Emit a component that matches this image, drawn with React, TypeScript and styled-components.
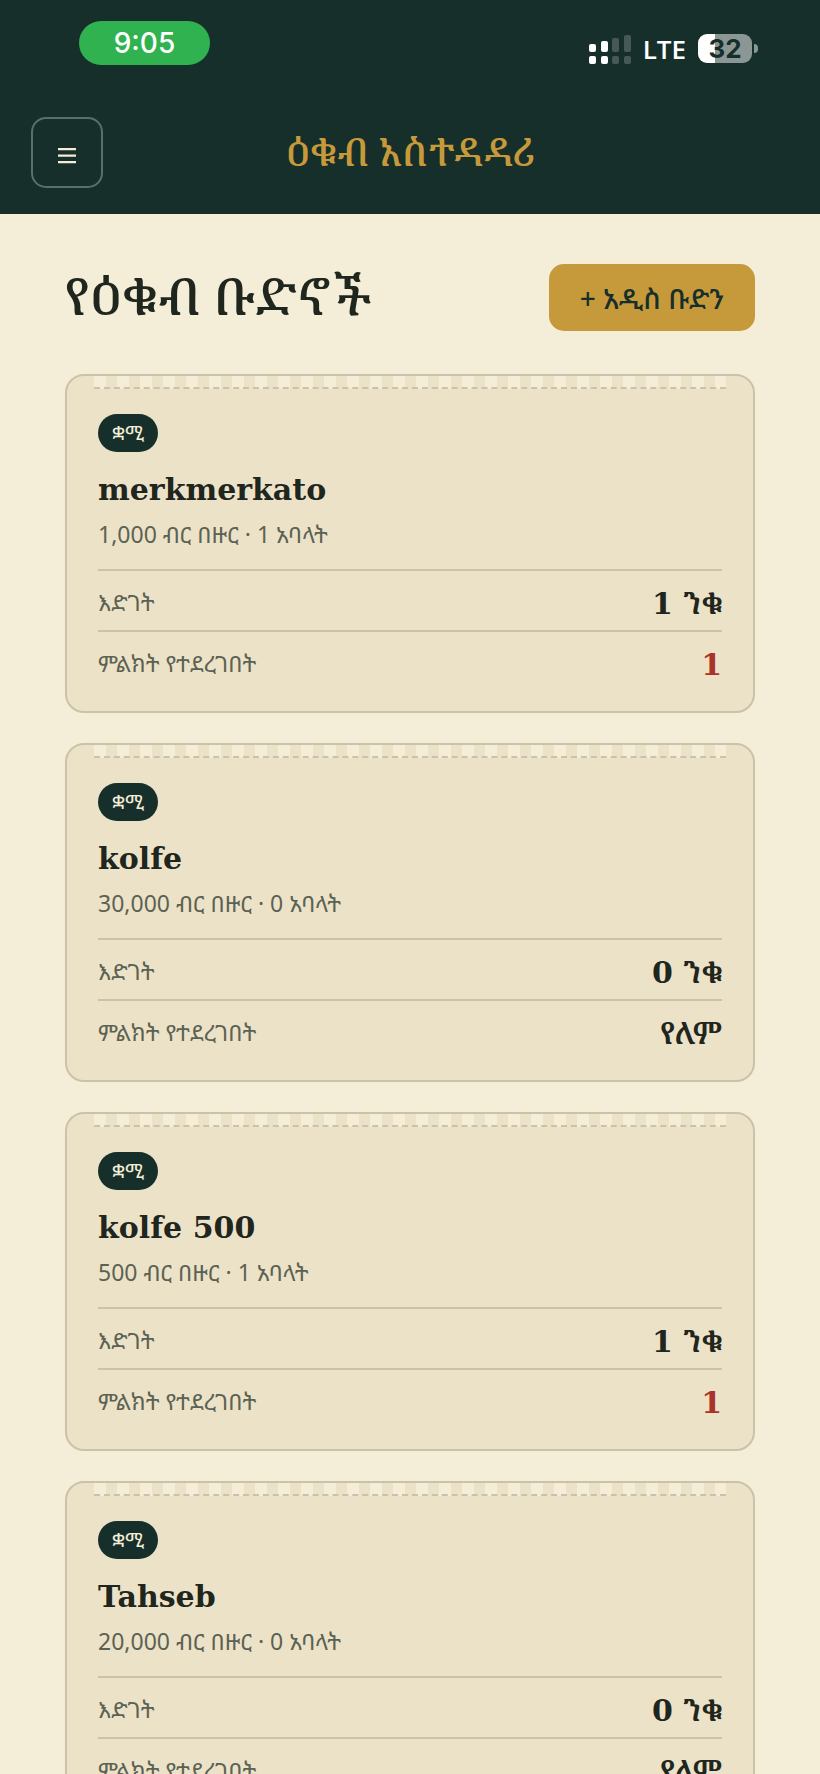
import React from 'react';
import styled, { createGlobalStyle } from 'styled-components';

const color = {
  forest: '#172f2a',
  cream: '#f4edd8',
  card: '#ece2c8',
  line: '#cac3a9',
  gold: '#c69a3b',
  ink: '#1f261d',
  muted: '#5c6253',
  red: '#a93329',
};

const sans = "'Noto Sans', 'Noto Sans Ethiopic', 'Abyssinica SIL', sans-serif";
const display = "'Liberation Serif', 'Noto Serif Ethiopic', 'Abyssinica SIL', serif";
const slab = "'DejaVu Serif', 'Noto Serif Ethiopic', 'Abyssinica SIL', serif";

const GlobalStyle = createGlobalStyle`
  *, *::before, *::after { box-sizing: border-box; }
  body { margin: 0; background: ${color.cream}; color: ${color.ink}; font-family: ${sans}; }
  h1, h2, p, dl, dd, ul { margin: 0; padding: 0; }
  button { font-family: inherit; cursor: pointer; }
`;

const Page = styled.div`
  height: 100vh;
  overflow-y: auto;
  scrollbar-width: none;
`;

const TopArea = styled.div`
  background: ${color.forest};
`;

const StatusBar = styled.div`
  display: flex;
  align-items: center;
  justify-content: space-between;
  height: 97px;
  padding: 0 62px 0 79px;
  color: #fff;
`;

const Clock = styled.time`
  width: 131px;
  margin-bottom: 12px;
  border-radius: 22px;
  background: #2fb24f;
  font-family: Inter, sans-serif;
  font-size: 28px;
  font-weight: 500;
  line-height: 44px;
  text-align: center;
`;

const StatusIcons = styled.div`
  display: flex;
  align-items: center;
  gap: 12px;
`;

const Network = styled.span`
  font-family: 'Open Sans', sans-serif;
  font-size: 26px;
  font-weight: 600;
  line-height: 32px;
`;

const Battery = styled.div`
  display: flex;
  align-items: center;
  gap: 2px;
  &::after {
    content: '';
    width: 4px;
    height: 9px;
    border-radius: 0 4px 4px 0;
    background: #8b9794;
  }
`;

const BatteryLevel = styled.span`
  width: 54px;
  border-radius: 9px;
  background: linear-gradient(to right, #fff 32%, #8b9794 32%);
  color: ${color.forest};
  font-family: Inter, sans-serif;
  font-size: 26px;
  font-weight: 700;
  line-height: 29px;
  text-align: center;
`;

const AppBar = styled.header`
  display: grid;
  grid-template-columns: 1fr auto 1fr;
  align-items: center;
  height: 117px;
  padding: 0 31px 6px;
`;

const MenuButton = styled.button`
  display: grid;
  place-items: center;
  width: 72px;
  height: 71px;
  padding: 0;
  border: 2px solid #58706a;
  border-radius: 15px;
  background: transparent;
  color: ${color.cream};
`;

const Brand = styled.p`
  color: ${color.gold};
  font-family: ${display};
  font-size: 39px;
  font-weight: 500;
  line-height: 48px;
`;

const Main = styled.main`
  padding: 50px 65px 32px;
`;

const Heading = styled.div`
  display: flex;
  align-items: center;
  justify-content: space-between;
  margin-bottom: 43px;
`;

const Title = styled.h1`
  font-family: ${display};
  font-size: 52px;
  font-weight: 500;
  line-height: 64px;
`;

const NewButton = styled.button`
  height: 67px;
  padding: 0 31px;
  border: 0;
  border-radius: 15px;
  background: ${color.gold};
  color: ${color.forest};
  font-size: 28px;
  font-weight: 500;
`;

const CardList = styled.ul`
  display: grid;
  gap: 30px;
  list-style: none;
`;

const Card = styled.li`
  position: relative;
  padding: 38px 31px 20px;
  border: 2px solid ${color.line};
  border-radius: 19px;
  background: ${color.card};
`;

const Perforation = styled.div`
  position: absolute;
  top: 0;
  left: 27px;
  right: 27px;
  height: 13px;
  border-bottom: 2px dashed ${color.line};
  background: repeating-linear-gradient(to right, ${color.cream} 0 12px, transparent 12px 23px);
`;

const Badge = styled.span`
  display: block;
  width: fit-content;
  padding: 0 14px;
  border-radius: 19px;
  background: ${color.forest};
  color: ${color.cream};
  font-size: 20px;
  line-height: 38px;
`;

const GroupName = styled.h2`
  margin-top: 16px;
  font-family: ${slab};
  font-size: 30px;
  font-weight: 700;
  line-height: 44px;
`;

const Meta = styled.p`
  margin-top: 4px;
  color: ${color.muted};
  font-size: 23px;
  line-height: 36px;
`;

const Stats = styled.dl`
  margin-top: 17px;
`;

const Stat = styled.div`
  display: flex;
  align-items: center;
  justify-content: space-between;
  height: 61px;
  padding-top: 3px;
  border-top: 2px solid ${color.line};
`;

const StatLabel = styled.dt`
  color: ${color.muted};
  font-size: 23px;
  line-height: 36px;
`;

const StatValue = styled.dd<{ $alert?: boolean }>`
  padding-top: 4px;
  color: ${(p) => (p.$alert ? color.red : color.ink)};
  font-family: ${slab};
  font-size: 30px;
  font-weight: 600;
  line-height: 40px;
`;

const groups = [
  { name: 'merkmerkato', amount: '1,000', members: 1, active: 1, marked: 1 },
  { name: 'kolfe', amount: '30,000', members: 0, active: 0, marked: 0 },
  { name: 'kolfe 500', amount: '500', members: 1, active: 1, marked: 1 },
  { name: 'Tahseb', amount: '20,000', members: 0, active: 0, marked: 0 },
];

function SignalIcon() {
  return (
    <svg width="42" height="30" viewBox="0 0 42 30" fill="#fff" aria-hidden="true">
      <rect x="0" y="10" width="7" height="8" rx="2" />
      <rect x="0" y="22" width="7" height="8" rx="2" />
      <rect x="12" y="7" width="7" height="11" rx="2" />
      <rect x="12" y="22" width="7" height="8" rx="2" />
      <g opacity="0.2">
        <rect x="23" y="4" width="7" height="14" rx="2" />
        <rect x="23" y="22" width="7" height="8" rx="2" />
        <rect x="35" y="1" width="7" height="17" rx="2" />
        <rect x="35" y="22" width="7" height="8" rx="2" />
      </g>
    </svg>
  );
}

export default function App() {
  return (
    <Page>
      <GlobalStyle />
      <TopArea>
        <StatusBar>
          <Clock>9:05</Clock>
          <StatusIcons>
            <SignalIcon />
            <Network>LTE</Network>
            <Battery><BatteryLevel>32</BatteryLevel></Battery>
          </StatusIcons>
        </StatusBar>
        <AppBar>
          <MenuButton type="button" aria-label="ምናሌ">
            <svg width="18" height="22" viewBox="0 0 18 22" fill="currentColor" aria-hidden="true">
              <path d="M0 6h18v2.300H0zM0 12.500h18v2.300H0zM0 19h18v2.300H0z" />
            </svg>
          </MenuButton>
          <Brand>ዕቁብ አስተዳዳሪ</Brand>
        </AppBar>
      </TopArea>
      <Main>
        <Heading>
          <Title>የዕቁብ ቡድኖች</Title>
          <NewButton type="button">+ አዲስ ቡድን</NewButton>
        </Heading>
        <CardList>
          {groups.map((g) => (
            <Card key={g.name}>
              <Perforation />
              <Badge>ቋሚ</Badge>
              <GroupName>{g.name}</GroupName>
              <Meta>{g.amount} ብር በዙር · {g.members} አባላት</Meta>
              <Stats>
                <Stat>
                  <StatLabel>እድገት</StatLabel>
                  <StatValue>{g.active} ንቁ</StatValue>
                </Stat>
                <Stat>
                  <StatLabel>ምልክት የተደረገበት</StatLabel>
                  <StatValue $alert={g.marked > 0}>{g.marked || 'የለም'}</StatValue>
                </Stat>
              </Stats>
            </Card>
          ))}
        </CardList>
      </Main>
    </Page>
  );
}
